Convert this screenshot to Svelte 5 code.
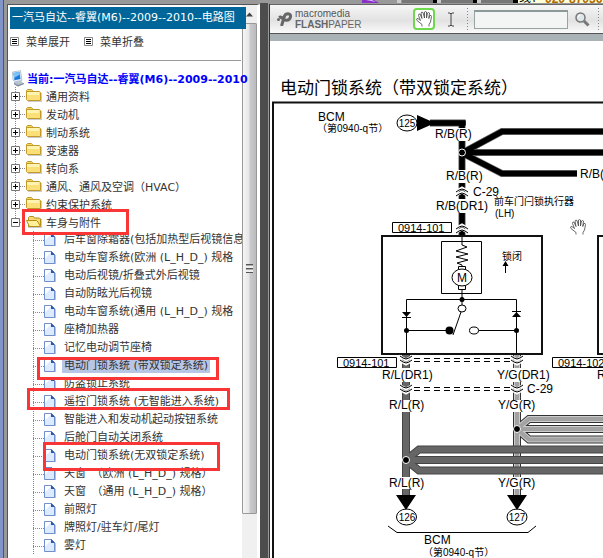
<script lang="ts">
  type Folder = { name: string; open?: boolean; items?: string[] };

  const TITLE = "一汽马自达--睿翼(M6)--2009--2010--电路图";
  const CURRENT = "当前:一汽马自达--睿翼(M6)--2009--2010";

  let folders = $state<Folder[]>([
    { name: "通用资料" },
    { name: "发动机" },
    { name: "制动系统" },
    { name: "变速器" },
    { name: "转向系" },
    { name: "通风、通风及空调（HVAC）" },
    { name: "约束保护系统" },
    {
      name: "车身与附件",
      open: true,
      items: [
        "后车窗除霜器(包括加热型后视镜信息",
        "电动车窗系统(欧洲 (L_H_D_) 规格",
        "电动后视镜/折叠式外后视镜",
        "自动防眩光后视镜",
        "电动车窗系统(通用 (L_H_D_) 规格",
        "座椅加热器",
        "记忆电动调节座椅",
        "电动门锁系统 (带双锁定系统)",
        "防盗锁止系统",
        "遥控门锁系统 (无智能进入系统)",
        "智能进入和发动机起动按钮系统",
        "后舱门自动关闭系统",
        "电动门锁系统(无双锁定系统)",
        "天窗　（欧洲 (L_H_D_) 规格）",
        "天窗　（通用 (L_H_D_) 规格）",
        "前照灯",
        "牌照灯/驻车灯/尾灯",
        "雾灯",
      ],
    },
  ]);

  let selected = $state("电动门锁系统 (带双锁定系统)");
  let query = $state("");

  // Red annotation frames over the tree
  const marks = [
    { x: 22, y: 209, w: 107, h: 26 },
    { x: 37, y: 357, w: 182, h: 23 },
    { x: 27, y: 388, w: 203, h: 22 },
    { x: 43, y: 442, w: 177, h: 29 },
  ];

  const blackWires = [
    "M430 123H465.500M462 123V128",
    "M462 141V170",
    "M462 183V199",
    "M462 213V236",
    "M462 153L502 131.5H1200",
    "M462 152.5H1200",
    "M462 153L502 173.5H577",
  ];
  const lightWires = [
    "M517 354V368",
    "M517 382V400",
    "M517 412V477",
    "M517 489V496",
    "M517 429L529 419H1200",
    "M517 429H1200",
    "M517 429L529 439.5H1200",
  ];
  const darkWires = [
    "M406 354V368",
    "M406 382V400",
    "M406 412V477",
    "M406 489V496",
    "M406 460L419 449.5H1200",
    "M406 460H1200",
    "M406 460L419 470.5H1200",
  ];

  const labels: [number, number, string][] = [
    [318, 121, "BCM"],
    [435, 138, "R/B(R)"],
    [446, 180, "R/B(R)"],
    [580, 178, "R/B(R)"],
    [473, 196, "C-29"],
    [436, 210, "R/B(DR1)"],
    [382, 379, "R/L(DR1)"],
    [497, 379, "Y/G(DR1)"],
    [597, 379, "R/L(DR1)"],
    [527, 393, "C-29"],
    [389, 409, "R/L(R)"],
    [498, 409, "Y/G(R)"],
    [389, 487, "R/L(R)"],
    [498, 487, "Y/G(R)"],
    [424, 544, "BCM"],
  ];

  const connectors: [number, number, string][] = [
    [398, 232, "0914-101"],
    [343, 367, "0914-101"],
    [558, 367, "0914-102"],
  ];

  const notes: [number, number, string][] = [
    [317, 132, "（第0940-q节）"],
    [494, 205, "前车门闩锁执行器"],
    [502, 260, "锁闭"],
    [423, 556, "（第0940-q节）"],
  ];

  function setAll(open: boolean) {
    for (const f of folders) f.open = open;
  }
</script>

{#snippet hand()}
  <path
    class="hand"
    d="M6 15.5V13.5L1 9.5Q0 8 1 7.5Q2.500 7.500 4.500 9.500L2.500 4.500Q2.500 2.500 4 3L6 7.500L5 2Q5.500 .5 7 1.500L8.500 7V1Q9.500 0 10.500 1V7L11.500 2Q12.500 1 13.500 2L12.800 7.500L13.800 4.500Q15.500 4 15.500 5.500L14.500 11L13 13.500V15.500"
  />
{/snippet}

{#snippet wires(kind: string, list: string[])}
  <g class="wire {kind}">
    {#each list as d}<path class="edge" {d} />{/each}
    {#each list as d}<path class="shade" {d} />{/each}
    {#each list as d}<path class="core" {d} />{/each}
  </g>
{/snippet}

{#snippet chevron(x: number, y: number, dir: number)}
  <g transform="translate({x} {y}) scale(1 {dir})">
    <path class="gap" d="M-7 -3L0 1L7 -3M-7 1L0 5L7 1" />
    <path class="thin" d="M-6 -3L-3 -1Q0 1 3 -1L6 -3M-6 1L-3 3Q0 5 3 3L6 1" />
  </g>
{/snippet}

<div class="screen">
  <div class="strip">
    <svg class="strip-art" height="4" aria-hidden="true">
      <path fill="#8b2fc9" d="M362 0h12l5 3h-17z" />
      <path fill="#d9b8f2" d="M366 0h6l4 2z" />
      <path fill="#777" d="M402 0h111v3H402z" />
      <path fill="#ccc" d="M397 0h4v3h-4zM437 0h4v3h-4zM477 0h4v3h-4z" />
      <path fill="#000" d="M433 0h4v3h-4zM473 0h4v3h-4zM513 0h5v3h-5z" />
      <path fill="#ffffd8" d="M518 0h700v3H518z" />
      <text x="519" y="2">线：</text>
      <text x="545" y="3" class="phone">020-87036</text>
    </svg>
  </div>

  <div class="body">
    <div class="edge-bar"></div>

    <aside class="side">
      <div class="content">
        <h1>{TITLE}</h1>
        <div class="tools">
          <button onclick={() => setAll(true)}>
            <svg width="9" height="9"><path class="menu-box" d="M.5 .5h8v8h-8z" /><path class="menu-bars" d="M2 2.500h5M2 4.500h5M2 6.500h5" /></svg>
            菜单展开
          </button>
          <button onclick={() => setAll(false)}>
            <svg width="9" height="9"><path class="menu-box" d="M.5 .5h8v8h-8z" /><path class="menu-bars" d="M2 2.500h5M2 4.500h5M2 6.500h5" /></svg>
            菜单折叠
          </button>
        </div>
        <div class="current">
          <svg width="14" height="17" viewBox="0 0 14 17">
            <path fill="#b9c3cf" d="M3 12l7-1 3 3-6 2.500-4-2z" />
            <path fill="#7d8997" d="M3 14l4 2.500 6-2.500v-1l-6 2-4-2z" />
            <path fill="#e3ebf4" stroke="#8fa5c0" stroke-width=".6" d="M1.500 2L9.500 .7l1.500 9.600-6.500 1.700-2.500-2z" />
            <path fill="#1c78dd" d="M2.500 3L8.500 2l1 7-6 1.200z" />
            <path fill="#79c3fa" d="M2.500 3L8.500 2l.4 2.500L3 8z" />
          </svg>
          <a href="#top">{CURRENT}</a>
        </div>
        <ul class="tree">
          {#each folders as folder, i}
            <li>
              <div class="row" class:last={i === folders.length - 1}>
                <span class="joint">
                  <button class="toggle" aria-label={folder.name} aria-expanded={!!folder.open} onclick={() => (folder.open = !folder.open)}>
                    <svg width="9" height="9">
                      <path class="toggle-box" d="M.5 .5h8v8h-8z" />
                      <path class="toggle-sign" d={folder.open ? "M2 4.500h5" : "M2 4.500h5M4.500 2v5"} />
                    </svg>
                  </button>
                </span>
                <span class="dots"></span>
                <svg class="folder" width="16" height="14" viewBox="0 0 16 14">
                  <path fill="#aaa" opacity=".6" d="M2 12h13V4h1v9H2z" />
                  {#if folder.open}
                    <path fill="#f5dc72" stroke="#b88d18" d="M2.500 11.500v-9l1-1h4l1 1.500h5l1 1v7z" />
                    <path fill="#fff09a" stroke="#b88d18" d="M.5 5.500h10l1.500 1.500 2.500 4.500h-11z" />
                  {:else}
                    <path fill="#f3d65c" stroke="#c39a2a" d="M.5 3V1.500l1-1h4l1 1V3" />
                    <path fill="#fbe07a" stroke="#c39a2a" d="M.5 2.500h13l1 1v8H1.500l-1-1z" />
                    <path fill="#fff3b0" d="M1 3h12v3H1z" />
                  {/if}
                </svg>
                <a href="#folder">{folder.name}</a>
              </div>
              {#if folder.open && folder.items}
                <ul class="leaves">
                  {#each folder.items as item}
                    <li class="row">
                      <span class="dots"></span>
                      <svg class="page" width="12" height="14" viewBox="0 0 12 14">
                        <path fill="#999" opacity=".6" d="M1 13h11V4h-1z" />
                        <path fill="#dcebff" stroke="#6f8fd0" d="M.5 .5h7l3 3v9H.5z" />
                        <path fill="#fff" d="M1 1h6L1 8z" />
                        <path fill="#2f55a8" d="M7 0l4 4H7z" />
                      </svg>
                      <a href="#doc" class:selected={item === selected} onclick={() => (selected = item)}>{item}</a>
                    </li>
                  {/each}
                </ul>
              {/if}
            </li>
          {/each}
        </ul>
      </div>

      <div class="scrollbar">
        <svg width="9" height="5"><path fill="#444" d="M1 4.500L4.500 .5L8 4.500z" /></svg>
        <div class="thumb"><span class="grip"></span></div>
      </div>
    </aside>

    <div class="divider"></div>

    <main class="viewer">
      <div class="toolbar">
        <div class="logo">
          <svg width="16" height="14" viewBox="0 0 16 14">
            <path fill="none" stroke="#666" stroke-width="3" d="M4.500 14L7.500 4Q8.500 1.800 11 1.800Q14 2 13.500 4.800Q12.800 8.500 9 8.300Q6.500 8 5.500 6.500Q4 4.500 2 5.500" />
            <circle fill="#666" cx="1.500" cy="7.500" r="1.500" />
          </svg>
          <div class="logo-text">
            <span>macromedia</span>
            <span class="name"><b>FLASH</b>PAPER</span>
          </div>
        </div>
        <button class="tool active" aria-label="Hand">
          <svg width="16" height="16">{@render hand()}</svg>
        </button>
        <button class="tool" aria-label="Select text">
          <svg width="8" height="15"><path class="ibeam" d="M1 1h2l1 1 1-1h2M4 2v11M1 14h2l1-1 1 1h2" /></svg>
        </button>
        <span class="sep"></span>
        <input type="text" aria-label="Find" bind:value={query} />
        <button class="find" aria-label="Find next">
          <svg width="15" height="15">
            <path stroke="#777" stroke-width="3" d="M9 9l4.500 4.500" />
            <circle cx="5.500" cy="5.500" r="4.500" fill="#dde6ea" stroke="#777" stroke-width="1.500" />
            <path stroke="#fff" fill="none" d="M3 5.500Q3 3 5.500 3" />
          </svg>
        </button>
        <span class="sep"></span>
      </div>

      <svg class="sheet">
        <g transform="translate(-270 -41)">
          <path class="frame" d="M273 600V102.500H1200" />
          <text class="title" x="280" y="94">电动门锁系统（带双锁定系统）</text>

          {@render wires("black", blackWires)}
          {@render wires("light", lightWires)}
          {@render wires("dark", darkWires)}

          <circle cx="462" cy="152.500" r="3.500" fill="#000" stroke="#fff" />
          <circle cx="517" cy="429" r="3.500" fill="#000" stroke="#fff" />
          <circle cx="406" cy="460" r="3.500" fill="#000" stroke="#fff" />

          <path d="M417 115L435 123L417 131zM396 495H416L406 510zM507 495H527L517 510z" />
          <g class="thin">
            <ellipse cx="407" cy="123" rx="10" ry="8" />
            <ellipse cx="406.500" cy="517" rx="10" ry="8" />
            <ellipse cx="517" cy="517" rx="10" ry="8" />
            <path d="M388 526L397 532.500H528L536 526" />
            <path d="M392.500 222.500h59v10h-59zM337.500 357.500h59v10h-59zM1200 357.500H552.500v10H1200" />
            <!-- motor and coil -->
            <path d="M441.500 241.500h40v52h-40z" />
            <path d="M462 236V245L467 247L456 251L468 254L456 257L468 260L457 263L462 265V267M462 289V305" />
            <path d="M458.500 266.500h7v4h-7zM458.500 285.500h7v4h-7z" />
            <ellipse cx="462" cy="277.500" rx="10" ry="8.500" fill="#fff" />
            <!-- diodes and switch -->
            <path d="M406.500 353V299.500H516.500V353M406 330.500H446M479 330.500H517" />
            <path d="M402 317.500h9M512 311.500h9" />
            <ellipse cx="462" cy="308.500" rx="4" ry="3.500" fill="#fff" />
            <ellipse cx="474" cy="330.500" rx="4.500" ry="3.500" fill="#fff" />
            <path d="M461 312L453 335M505.500 273V264" />
          </g>
          <path d="M402 312h9l-4.500 5zM512 317h9l-4.500-5zM505.500 261l3 5h-6z" />
          <circle cx="462" cy="299.500" r="2.500" />
          <circle cx="406.500" cy="330.500" r="2.500" />
          <circle cx="516.500" cy="330.500" r="2.500" />
          <circle cx="449.500" cy="330.500" r="4" />
          <path class="box" d="M382 236h160v118H382zM1200 236H598v118H1200" />

          {@render chevron(462, 193, -1)}
          {@render chevron(462, 230, -1)}
          {@render chevron(406, 359, 1)}
          {@render chevron(517, 359, 1)}
          {@render chevron(406, 388, 1)}
          {@render chevron(517, 388, 1)}
          <path class="dash" d="M414 358.500H510M414 361.500H510M414 387.500H510M414 390.500H510" />

          {#each labels as [x, y, text]}
            <text class="label" {x} {y}>{text}</text>
          {/each}
          {#each connectors as [x, y, text]}
            <text class="connector" {x} {y}>{text}</text>
          {/each}
          {#each notes as [x, y, text]}
            <text class="note" {x} {y}>{text}</text>
          {/each}
          <text class="note" x="495" y="217">(LH)</text>
          <text class="label mid" x="462" y="282">M</text>
          <text class="note mid" x="407" y="127">125</text>
          <text class="note mid" x="407" y="521">126</text>
          <text class="note mid" x="517" y="521">127</text>

          <g transform="translate(570 219)">{@render hand()}</g>
        </g>
      </svg>
    </main>
  </div>

  {#each marks as m}
    <div class="mark" style="left:{m.x}px;top:{m.y}px;width:{m.w}px;height:{m.h}px"></div>
  {/each}
</div>

<style>
  :global(body) {
    margin: 0;
    background: #999;
  }

  .screen {
    position: relative;
    display: flex;
    flex-direction: column;
    height: 100vh;
    overflow: hidden;
    font-family: "DejaVu Sans", "Noto Sans CJK SC", sans-serif;
    font-size: 11px;
    color: #333;
  }

  button {
    display: flex;
    align-items: center;
    border: 0;
    padding: 0;
    background: none;
    font: inherit;
    color: inherit;
  }

  svg {
    display: block;
    flex-shrink: 0;
  }

  a {
    color: inherit;
    text-decoration: none;
    white-space: nowrap;
  }

  ul {
    list-style: none;
    margin: 0;
    padding: 0;
  }

  .strip {
    height: 4px;
    background: #999;
  }

  .strip-art {
    width: 100%;
    font-family: "Liberation Sans", "Noto Sans CJK SC", sans-serif;
    font-size: 12px;
  }

  .phone {
    fill: #b06a00;
    font-weight: bold;
  }

  .body {
    flex: 1;
    display: flex;
    min-height: 0;
  }

  .edge-bar {
    width: 3px;
    flex-shrink: 0;
    margin-top: -4px;
    background: #8295c8;
    border-right: 1px solid #3156b4;
  }

  .side {
    position: relative;
    display: flex;
    width: 249px;
    flex-shrink: 0;
    margin-left: 3px;
    border-left: 1px solid #555;
    border-right: 3px solid #fff;
    border-top: 1px solid #555;
    background: #fff;
  }

  .content {
    flex: 1;
    min-width: 0;
    padding-top: 2px;
  }

  h1 {
    position: relative;
    z-index: 1;
    margin: 0 -4px 0 2px;
    padding-left: 2px;
    background: #069;
    color: #fff;
    font-size: 11px;
    font-weight: normal;
    line-height: 22px;
    white-space: nowrap;
  }

  .tools {
    display: flex;
    gap: 14px;
    height: 24px;
    margin-right: 1px;
    padding: 0 0 7px 2px;
    border-bottom: 1px solid #999;
  }

  .tools button {
    gap: 7px;
  }

  .menu-box {
    fill: #fff;
    stroke: #888;
  }

  .menu-bars,
  .toggle-sign {
    fill: none;
    stroke: #000;
  }

  .current {
    position: relative;
    z-index: 1;
    display: flex;
    align-items: center;
    gap: 2px;
    height: 18px;
    margin-top: 8px;
    padding-left: 3px;
    font-weight: bold;
    color: #00f;
  }

  .tree {
    overflow: hidden;
  }

  .row {
    display: flex;
    align-items: center;
    height: 18px;
    padding-left: 3px;
  }

  .joint {
    display: flex;
    align-items: center;
    width: 9px;
    height: 18px;
    background: repeating-linear-gradient(#888 0 1px, transparent 1px 2px) 4px 0 / 1px 100% no-repeat;
  }

  .last .joint {
    background-size: 1px 50%;
  }

  .toggle-box {
    fill: #fff;
    stroke: #777;
  }

  .dots {
    width: 6px;
    height: 1px;
    flex-shrink: 0;
    background: repeating-linear-gradient(90deg, #888 0 1px, transparent 1px 2px);
  }

  .folder {
    margin-right: 4px;
  }

  .leaves .row {
    padding-left: 25px;
    background: repeating-linear-gradient(#888 0 1px, transparent 1px 2px) 25px 0 / 1px 100% no-repeat;
  }

  .leaves .dots {
    width: 11px;
  }

  .page {
    margin-right: 6px;
  }

  .leaves a {
    padding: 0 2px;
    line-height: 14px;
  }

  .selected {
    background: #b8c6e6;
  }

  .scrollbar {
    display: flex;
    flex-direction: column;
    align-items: center;
    width: 15px;
    padding-top: 7px;
    gap: 6px;
    background: #f0f0f0;
  }

  .thumb {
    display: flex;
    align-items: center;
    justify-content: center;
    box-sizing: border-box;
    width: 15px;
    height: 90%;
    border: 1px solid #999;
    border-radius: 1px;
    background: linear-gradient(90deg, #f6f6f6, #e6e6e6 45%, #c9cacf 55%, #bbb);
  }

  .grip {
    width: 7px;
    height: 9px;
    background: repeating-linear-gradient(#555 0 1px, #aaa 1px 2px, #eee 2px 4px);
  }

  .divider {
    width: 8px;
    flex-shrink: 0;
    margin-top: -1px;
    background: #4d4d4d;
    border-right: 1px solid #999;
  }

  .viewer {
    flex: 1;
    display: flex;
    flex-direction: column;
    min-width: 0;
    border-left: 1px solid #333;
    background: #fff;
  }

  .toolbar {
    display: flex;
    align-items: center;
    height: 28px;
    border-top: 1px solid #666;
    border-bottom: 1px solid #555;
    padding-left: 7px;
    background: linear-gradient(#f6f6f6, #e2e2e2 55%, #fafafa);
    box-shadow: 0 7px #a9b3b5;
  }

  .logo {
    display: flex;
    align-items: center;
    gap: 2px;
    width: 136px;
    color: #555;
    font-family: "Liberation Sans", sans-serif;
  }

  .logo-text {
    display: flex;
    flex-direction: column;
    font-size: 10px;
    line-height: 11px;
  }

  .name {
    color: #666;
  }

  .tool {
    justify-content: center;
    width: 22px;
    height: 22px;
    margin-right: 5px;
    box-sizing: border-box;
  }

  .active {
    border: 2px solid #6fd84c;
    border-radius: 4px;
    background: #fff;
  }

  .ibeam {
    fill: none;
    stroke: #444;
  }

  .sep {
    width: 1px;
    height: 22px;
    background: repeating-linear-gradient(#888 0 1px, transparent 1px 3px);
  }

  input {
    width: 94px;
    height: 19px;
    box-sizing: border-box;
    margin: 0 7px 0 6px;
    padding: 0 3px;
    border: 1px solid #98a3a3;
    border-top: 2px solid #8d9999;
    border-radius: 0;
    background: #f3f4f4;
    font: inherit;
  }

  .find {
    margin-right: 8px;
  }

  .sheet {
    flex: 1;
    width: 100%;
    min-height: 0;
    margin-top: 7px;
    font-family: "Liberation Sans", "Noto Sans CJK SC", sans-serif;
    fill: #000;
  }

  .title {
    font-size: 17px;
  }

  .label {
    font-size: 12px;
  }

  .connector {
    font-size: 11px;
  }

  .note {
    font-size: 10px;
  }

  .mid {
    text-anchor: middle;
  }

  .hand {
    fill: #fff;
    stroke: #444;
    stroke-width: 0.8;
  }

  .frame,
  .box {
    fill: none;
    stroke: #111;
    stroke-width: 2;
  }

  .thin {
    fill: none;
    stroke: #000;
  }

  .gap {
    fill: none;
    stroke: #fff;
    stroke-width: 3;
  }

  .dash {
    stroke: #000;
    stroke-dasharray: 6 4;
  }

  .wire path {
    fill: none;
  }

  .edge {
    stroke-width: 8;
  }

  .shade {
    stroke-width: 6;
  }

  .core {
    stroke-width: 4;
  }

  .black .edge {
    stroke: #555;
    stroke-width: 7;
  }

  .black .shade,
  .black .core {
    stroke: #000;
    stroke-width: 5;
  }

  .light .edge {
    stroke: #333;
  }

  .light .shade {
    stroke: #ccc;
  }

  .light .core {
    stroke: #a2a2a2;
  }

  .dark .edge {
    stroke: #444;
  }

  .dark .shade,
  .dark .core {
    stroke: #666;
  }

  .mark {
    position: absolute;
    box-sizing: border-box;
    border: 3px solid #f93535;
    pointer-events: none;
  }
</style>
